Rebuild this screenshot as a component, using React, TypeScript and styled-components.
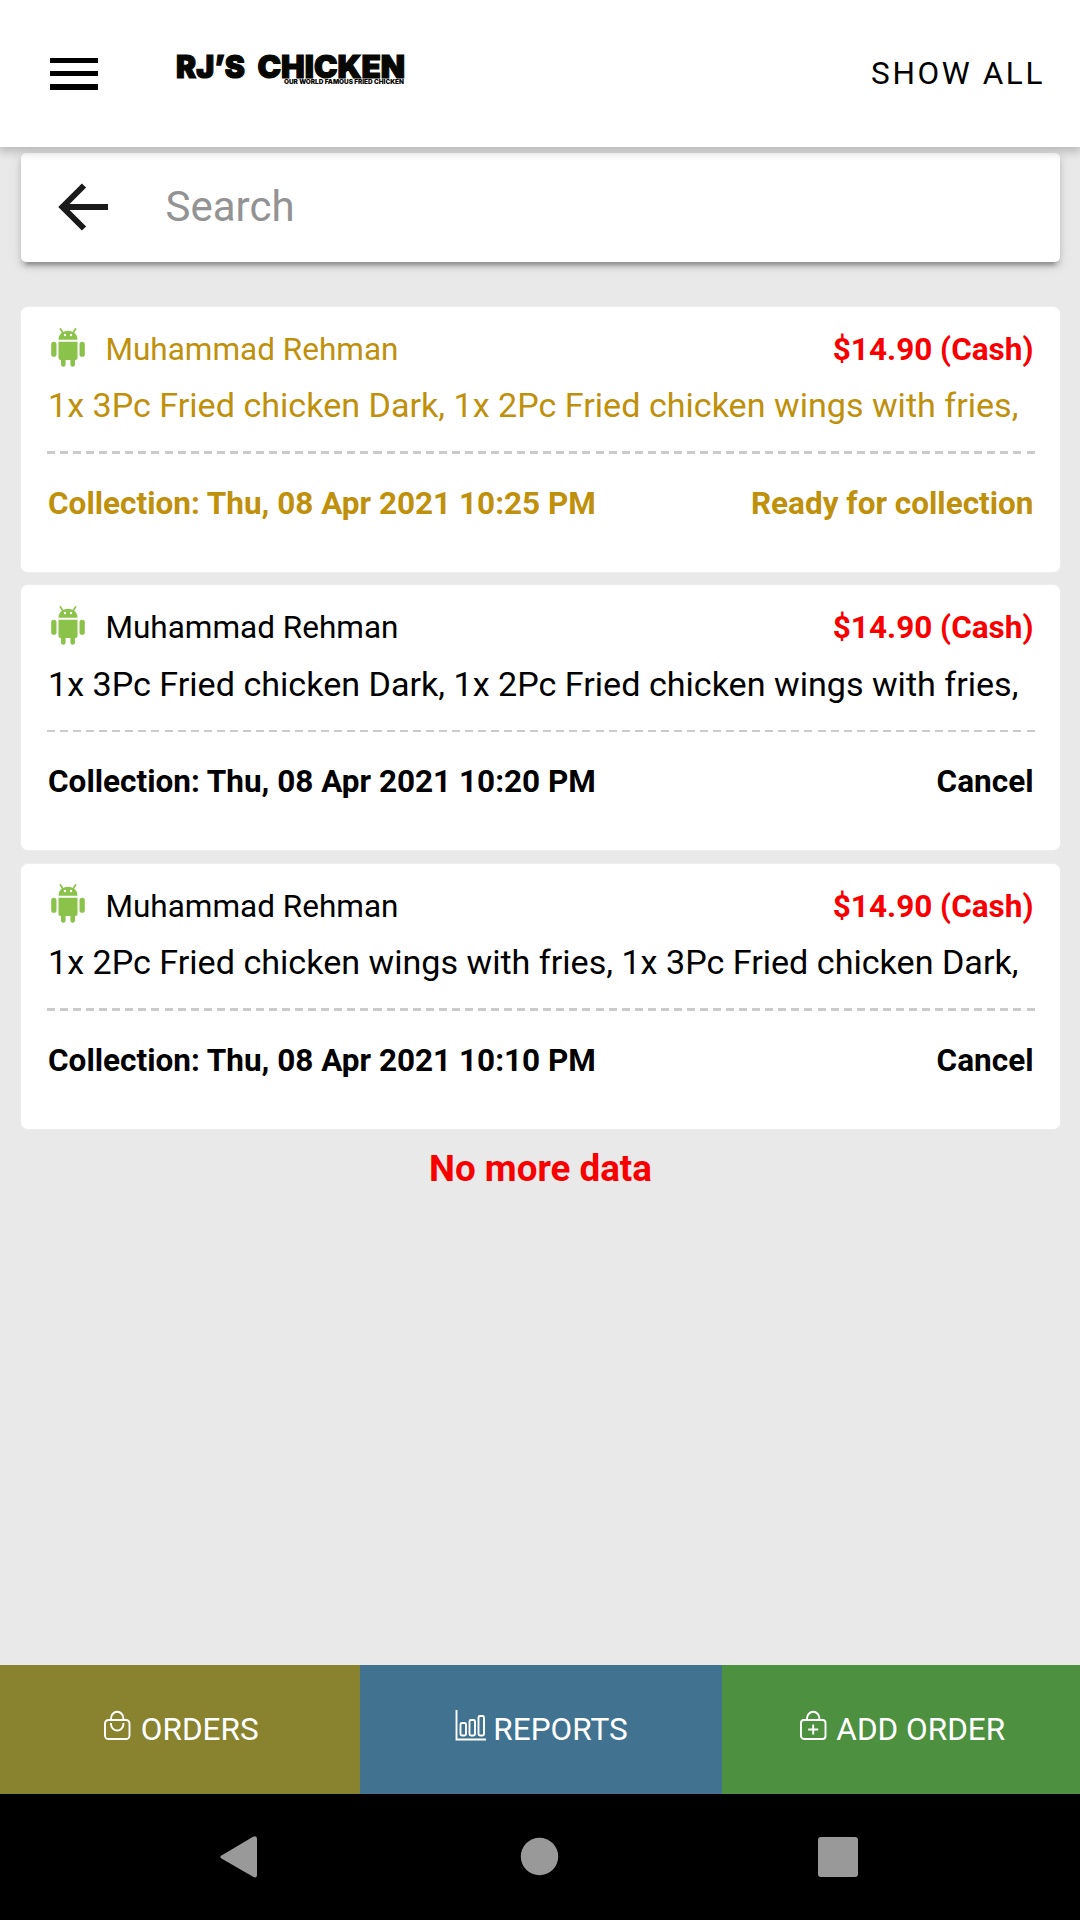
import React from "react";
import styled, { createGlobalStyle } from "styled-components";

const GlobalStyle = createGlobalStyle`
  * { box-sizing: border-box; }
  body { margin: 0; background: #e9e9e9; font-family: Roboto, "Noto Sans", sans-serif; color: #000; }
  button, input { font: inherit; color: inherit; border: 0; background: none; padding: 0; outline: none; }
`;

const Screen = styled.div`
  width: 1080px;
  height: 1920px;
  display: flex;
  flex-direction: column;
  overflow: hidden;
  background: #e9e9e9;
`;

const Header = styled.header`
  height: 147px;
  flex: none;
  display: flex;
  align-items: center;
  padding: 0 35px 0 50px;
  background: #fff;
  box-shadow: 0 4px 9px 1px rgba(0, 0, 0, 0.2);
  z-index: 1;
`;

const MenuButton = styled.button`
  width: 48px;
  height: 32px;
  display: flex;
  flex-direction: column;
  justify-content: space-between;
`;

const MenuLine = styled.span`
  height: 5.5px;
  background: #000;
`;

const Logo = styled.svg`
  width: 250px;
  height: 52px;
  margin: 0 auto 9px 68px;
  display: block;
  overflow: visible;
  font-family: Inter, "DejaVu Sans", sans-serif;
  font-weight: 900;
  fill: #070703;
`;

const ShowAll = styled.button`
  font-size: 31.5px;
  line-height: 40px;
  letter-spacing: 2.6px;
`;

const Content = styled.main`
  flex: 1;
  display: flex;
  flex-direction: column;
  padding: 5.5px 20px 0 21px;
`;

const SearchBar = styled.label`
  height: 109.5px;
  display: flex;
  align-items: center;
  padding-left: 36px;
  background: #fff;
  border-radius: 5px;
  box-shadow: 0 8px 3px -5px rgba(0, 0, 0, 0.2), 0 5px 5px rgba(0, 0, 0, 0.14),
    0 3px 13px rgba(0, 0, 0, 0.12);
`;

const BackIcon = styled.svg`
  width: 54px;
  height: 54px;
  margin-right: 54.5px;
`;

const SearchInput = styled.input`
  flex: 1;
  height: 60px;
  margin-bottom: 2px;
  font-size: 42px;
  &::placeholder { color: #939393; opacity: 1; }
`;

const OrderList = styled.div`
  margin-top: 45.2px;
  display: flex;
  flex-direction: column;
  gap: 13.3px;
`;

const Card = styled.article<{ $accent: string }>`
  height: 265px;
  padding: 23px 26px 0;
  background: #fff;
  border-radius: 7px;
  color: ${(p) => p.$accent};
  box-shadow: 0 0 2px rgba(255, 255, 255, 0.7);
`;

const CardRow = styled.div<{ $bold?: boolean }>`
  height: 40px;
  display: flex;
  justify-content: space-between;
  padding: 0 0.5px 0 1px;
  font-size: 31.5px;
  line-height: 40px;
  font-weight: ${(p) => (p.$bold ? 700 : 400)};
`;

const Customer = styled.div`
  display: flex;
  gap: 20.5px;
`;

const RobotIcon = styled.svg`
  width: 34px;
  height: 39px;
  margin: -2.5px 0 0 3px;
`;

const Price = styled.span`
  font-weight: 700;
  color: #f80000;
`;

const Items = styled.p`
  margin: 13.3px 0 24px 1px;
  font-size: 34.125px;
  line-height: 44px;
  white-space: nowrap;
`;

const Divider = styled.div`
  height: 2.5px;
  margin: 0 -0.5px 30px 0;
  background: repeating-linear-gradient(90deg, #cbcbcb 0 8px, transparent 8px 13.06px);
`;

const EndNote = styled.p`
  margin: 16px 0 0;
  text-align: center;
  font-size: 36.75px;
  line-height: 48px;
  font-weight: 700;
  color: #f80000;
`;

const Tabs = styled.nav`
  flex: none;
  height: 129px;
  display: grid;
  grid-template-columns: 359.5px 362px 1fr;
`;

const Tab = styled.button<{ $color: string }>`
  display: flex;
  align-items: center;
  justify-content: center;
  background: ${(p) => p.$color};
  color: #fff;
  font-size: 31.5px;
  line-height: 40px;
`;

const TabIcon = styled.svg`
  width: 32px;
  height: 32px;
  margin: 0 6.5px 9px 1.5px;
  fill: none;
  stroke: currentColor;
  stroke-width: 1.9;
`;

const SystemNav = styled.footer`
  flex: none;
  height: 126px;
  display: flex;
  align-items: center;
  justify-content: space-between;
  padding: 0 222px 0 219px;
  background: #000;
`;

const NavIcon = styled.svg`
  width: 40px;
  height: 44px;
  fill: #999;
`;

const Robot = () => (
  <RobotIcon viewBox="0 0 34 39" fill="#8bc34a">
    <path d="M7.500 11.800C7.500 6.500 11.500 2.800 17 2.800s9.500 3.700 9.500 9z" />
    <path d="M9 0.300l3 4.700M25 0.300l-3 4.700" stroke="#8bc34a" strokeWidth="1.700" />
    <circle cx="14" cy="7" r="1.200" fill="#fff" />
    <circle cx="20" cy="7" r="1.200" fill="#fff" />
    <path d="M7.500 13.800h19V30a2 2 0 0 1-2 2H24v4.500a2.200 2.200 0 0 1-4.600 0V32h-4.800v4.500a2.200 2.200 0 0 1-4.600 0V32h-.500a2 2 0 0 1-2-2z" />
    <rect x="0.200" y="13.800" width="5.300" height="15" rx="2.600" />
    <rect x="28.500" y="13.800" width="5.300" height="15" rx="2.600" />
  </RobotIcon>
);

interface Order {
  items: string;
  time: string;
  status: string;
  accent: string;
}

const orders: Order[] = [
  {
    items: "1x 3Pc Fried chicken Dark, 1x 2Pc Fried chicken wings with fries,",
    time: "10:25 PM",
    status: "Ready for collection",
    accent: "#bf900c",
  },
  {
    items: "1x 3Pc Fried chicken Dark, 1x 2Pc Fried chicken wings with fries,",
    time: "10:20 PM",
    status: "Cancel",
    accent: "#000",
  },
  {
    items: "1x 2Pc Fried chicken wings with fries, 1x 3Pc Fried chicken Dark,",
    time: "10:10 PM",
    status: "Cancel",
    accent: "#000",
  },
];

const OrderCard = ({ order }: { order: Order }) => (
  <Card $accent={order.accent}>
    <CardRow>
      <Customer>
        <Robot />
        <span>Muhammad Rehman</span>
      </Customer>
      <Price>$14.90 (Cash)</Price>
    </CardRow>
    <Items>{order.items}</Items>
    <Divider />
    <CardRow $bold>
      <span>Collection: Thu, 08 Apr 2021 {order.time}</span>
      <span>{order.status}</span>
    </CardRow>
  </Card>
);

export default function App() {
  return (
    <Screen>
      <GlobalStyle />
      <Header>
        <MenuButton aria-label="Menu">
          <MenuLine />
          <MenuLine />
          <MenuLine />
        </MenuButton>
        <Logo viewBox="0 0 250 52">
          <g fontSize="31" stroke="#070703" strokeWidth="1.200">
            <text x="10" y="34.500" textLength="69" lengthAdjust="spacingAndGlyphs">RJ’S</text>
            <text x="91.500" y="34.500" textLength="147.500" lengthAdjust="spacingAndGlyphs">CHICKEN</text>
          </g>
          <text x="118" y="41.300" fontSize="6.300" textLength="120" lengthAdjust="spacingAndGlyphs">
            OUR WORLD FAMOUS FRIED CHICKEN
          </text>
        </Logo>
        <ShowAll>SHOW ALL</ShowAll>
      </Header>
      <Content>
        <SearchBar>
          <BackIcon viewBox="0 0 54 54" fill="none" stroke="#1a1a1a" strokeWidth="6">
            <path d="M27 5.500L5.500 27L27 48.500M5.500 27H51" />
          </BackIcon>
          <SearchInput placeholder="Search" />
        </SearchBar>
        <OrderList>
          {orders.map((order) => (
            <OrderCard key={order.time} order={order} />
          ))}
        </OrderList>
        <EndNote>No more data</EndNote>
      </Content>
      <Tabs>
        <Tab $color="#89832f">
          <TabIcon viewBox="0 0 32 32">
            <rect x="3" y="11" width="24.500" height="19" rx="3.500" />
            <path d="M9 11V9.500a6.200 6.700 0 0 1 12.400 0V11M9 14v1a6.200 6.500 0 0 0 12.400 0v-1" />
          </TabIcon>
          ORDERS
        </Tab>
        <Tab $color="#417391">
          <TabIcon viewBox="0 0 32 32">
            <path d="M1.500 1V30.500H31" />
            <rect x="5.500" y="14" width="5.500" height="12.500" rx="1.500" />
            <rect x="14.500" y="11" width="5.500" height="15.500" rx="1.500" />
            <rect x="23.500" y="7" width="5.500" height="19.500" rx="1.500" />
          </TabIcon>
          REPORTS
        </Tab>
        <Tab $color="#4d9140">
          <TabIcon viewBox="0 0 32 32">
            <rect x="3" y="11" width="24.500" height="19" rx="3" />
            <path d="M9 11V9.500a6.200 6.700 0 0 1 12.400 0V11M15.200 15.500v10M10.200 20.500h10" />
          </TabIcon>
          ADD ORDER
        </Tab>
      </Tabs>
      <SystemNav>
        <NavIcon viewBox="0 0 40 44">
          <path d="M2.500 20.500L34 1.800Q38 0 38 4V39.500Q38 43.500 34.500 42L2.500 23.500Q0 22 2.500 20.500z" />
        </NavIcon>
        <NavIcon viewBox="0 0 40 44">
          <circle cx="20.500" cy="21.500" r="18.700" />
        </NavIcon>
        <NavIcon viewBox="0 0 40 44">
          <rect x="0" y="2" width="40" height="40" rx="3" />
        </NavIcon>
      </SystemNav>
    </Screen>
  );
}
